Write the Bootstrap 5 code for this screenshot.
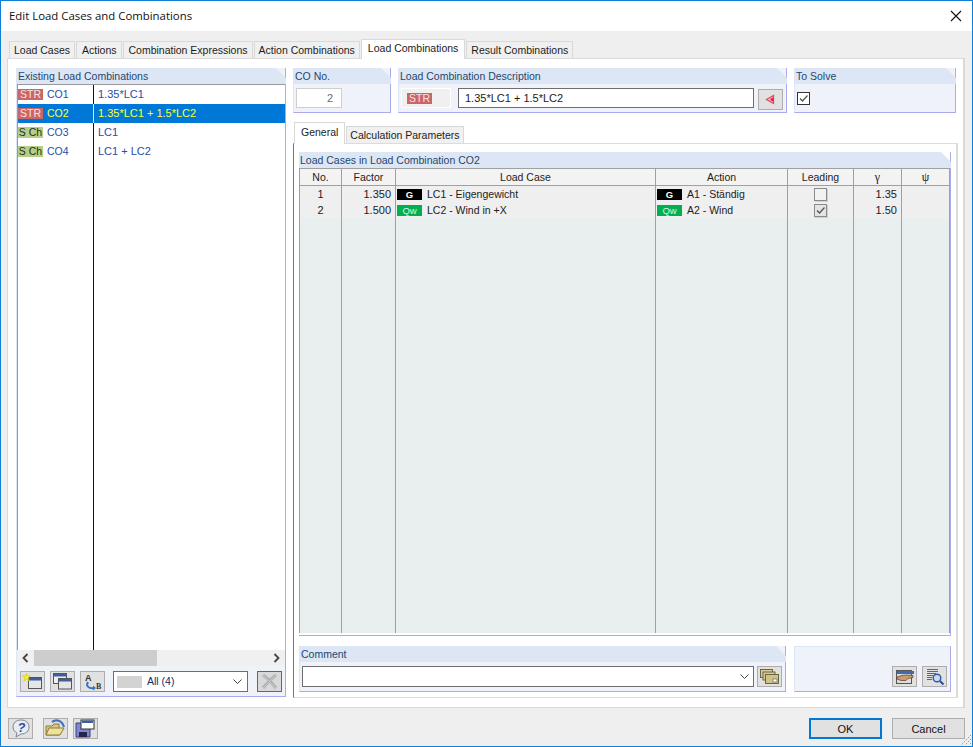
<!DOCTYPE html>
<html lang="en">
<head>
  <meta charset="UTF-8" />
  <title>Edit Load Cases and Combinations</title>
  <link href="https://cdn.jsdelivr.net/npm/bootstrap@5.3.2/dist/css/bootstrap.min.css" rel="stylesheet"/>
  <style>
    html, body { margin: 0; height: 100%; overflow: hidden; background: #efefef; }
    body, .form-control, .btn { font-family: "Liberation Sans", Arial, sans-serif; font-size: 10.5px; color: #1c1c1c; }

    .dlg-win { width: 973px; height: 747px; border: 1px solid #0f7fd6; background: #efefef; position: relative; }
    .dlg-title { height: 30px; background: #fff; padding: 0 10px 0 8px; font-family: "Open Sans", sans-serif; font-size: 11.4px; color: #111; flex: none; }
    .dlg-main { padding: 7px 7px 0 6px; min-height: 0; }

    /* tabs */
    .dlg-tabs { border: 0; padding-left: 2px; height: 20px; align-items: flex-end; flex-wrap: nowrap; }
    .dlg-tabs .nav-link { height: 17px; padding: 0 4px; margin: 0 1px 0 0; line-height: 17px; border: 1px solid #d9d9d9; border-bottom: 0; border-radius: 0; background: #f0f0f0; color: #1c1c1c; font-size: 10.5px; }
    .dlg-tabs .nav-link.tab-wide { padding: 0 5px; }
    .dlg-tabs .nav-link.active { height: 20px; line-height: 16px; padding: 0 6px; background: #fff; color: #1c1c1c; border-color: #d9d9d9; margin-bottom: -1px; position: relative; z-index: 1; }
    .sub-tabs { height: 21px; padding-left: 1px; }
    .sub-tabs .nav-link { padding: 0 3px; }
    .sub-tabs .nav-link.active { height: 22px; line-height: 18px; }

    .panel-box { width: 958px; height: 650px; background: #fff; border: 1px solid #d9d9d9; border-right-width: 2px; padding: 9px 0 0 8px; gap: 7px; flex: none; }

    /* blue group boxes */
    .grp { background: #eff2f8; border-right: 1px solid #aaaaec; border-bottom: 1px solid #aaaaec; border-left: 1px solid #dce6f4; flex: none; }
    .grp-head { height: 16px; line-height: 16px; background: #dce6f4; color: #24466f; padding-left: 1px; margin-right: -1px; clip-path: polygon(0 0, calc(100% - 10px) 0, 100% 10px, 100% 100%, 0 100%); flex: none; }

    /* left list */
    .grp-list { width: 270px; height: 629px; }
    .combo-list { background: #fff; border-top: 1px solid #9a9a9a; border-left: 1px solid #9a9a9a; position: relative; min-height: 0; }
    .combo-list::before { content: ""; position: absolute; left: 75px; top: 0; bottom: 0; width: 1px; background: #111; }
    .combo-row { height: 19px; line-height: 19px; color: #2a4aa8; position: relative; }
    .combo-row.picked { background: #0078d7; color: #ffff33; }
    .combo-row.picked .combo-id { border-right: 1px solid #d5e6f5; }
    .combo-id { width: 76px; gap: 4px; flex: none; }
    .combo-val { padding-left: 4px; font-size: 11px; }

    .sticker { display: inline-block; width: 25px; height: 11px; line-height: 11px; text-align: center; flex: none; }
    .st-str { background: #cc6666; color: #f6e3e3; }
    .st-sch { background: #b5cf8a; color: #26301a; }
    .st-g { background: #000; color: #fff; font-weight: 700; font-size: 9.5px; }
    .st-qw { background: #00b050; color: #d9f5e4; font-size: 9.5px; }

    .hscroll { height: 16px; background: #f0f0f0; flex: none; }
    .hscroll-thumb { position: absolute; left: 17px; width: 123px; top: 0; bottom: 0; background: #cdcdcd; }
    .hscroll .scroll-arrow { width: 17px; }

    .list-tools { height: 30px; padding: 5px 0 0 3px; gap: 5px; flex: none; }
    .tool-btn { width: 25px; height: 21px; padding: 0; border: 1px solid #adadad; border-radius: 0; background: #e1e1e1; flex: none; display: flex; align-items: center; justify-content: center; }
    .tool-btn.off { background: #cccccc; }
    .drop-box { height: 21px; border: 1px solid #6e6e6e; background: #fff; color: #12296e; flex: none; }
    .drop-all { width: 135px; margin: 0 4px 0 3px; padding: 0 5px 0 3px; gap: 5px; }
    .swatch { width: 25px; height: 12px; background: #d3d3d3; flex: none; }

    /* top row on the right */
    .side-col { width: 664px; flex: none; }
    .top-row { gap: 7px; height: 45px; flex: none; }
    .grp-no { width: 98px; }
    .grp-desc { width: 389px; }
    .grp-solve { width: 162px; }
    .grp-body-pad { padding: 4px 0 0 2px; }
    .dlg-input.form-control { height: 20px; min-height: 0; padding: 0 6px; border-radius: 0; border: 1px solid #6e6e6e; font-size: 11px; color: #1c1c1c; box-shadow: none; }
    .no-input.form-control { width: 46px; border-color: #cfcfcf; text-align: right; color: #6a6a6a; padding-right: 8px; background: #fff; }
    .desc-sticker { width: 50px; height: 20px; margin-right: 7px; padding-left: 5px; background: #f0f0f0; border: 1px solid #fff; flex: none; }
    .desc-input.form-control { width: 296px; flex: none; }
    .grp-desc .tool-btn { margin: 1px 0 0 4px; }

    .form-check-input.dlg-check { width: 13px; height: 13px; margin: 0; border: 1px solid #333; border-radius: 0; background-color: #fff; box-shadow: none; float: none; flex: none; }
    .form-check-input.dlg-check:checked { background-color: #fff; border-color: #333; background-size: 11px; background-image: url("data:image/svg+xml,%3csvg xmlns='http://www.w3.org/2000/svg' viewBox='0 0 11 11'%3e%3cpath fill='none' stroke='%23555' stroke-width='1.3' d='M2 5.5 4.5 8 9.5 2.5'/%3e%3c/svg%3e"); }
    .form-check-input.dlg-check.dim { border-color: #8a8a8a; box-shadow: 1px 1px 0 #cfcfcf; opacity: 1; vertical-align: middle; background-color: #f2f2f2; }
    .form-check-input.dlg-check.dim:checked { background-color: #e4e4e4; border-color: #8a8a8a; }

    .sub-wrap { margin: 9px 0 0 0; flex: none; }
    .sub-pane { width: 665px; height: 555px; border: 1px solid #dcdcdc; border-left-color: #777; border-right-width: 2px; padding: 8px 0 0 5px; background: #fff; }

    /* grid */
    .grp-grid { width: 652px; height: 484px; background: #fff; border-left: 0; }
    .lc-grid { table-layout: fixed; width: 651px; height: 465px; border-collapse: separate; border-spacing: 0; }
    .lc-grid > :not(caption) > * > * { padding: 0 4px; border-width: 0 1px 0 0; border-style: solid; border-color: #a0a0a0; background-color: #efefef; color: #1c1c1c; font-size: 11px; line-height: 15px; height: 16px; vertical-align: middle; white-space: nowrap; box-shadow: none; }
    .lc-grid > thead > tr > th { font-weight: 400; font-size: 10.5px; text-align: center; background-color: #f3f3f3; border-top-width: 1px; border-bottom-width: 1px; height: 18px; }
    .lc-grid > :not(caption) > * > *:first-child { border-left-width: 1px; }
    .lc-grid > :not(caption) > tr.rest > td { height: auto; background-color: #e9eeee; }
    .lc-grid > tbody > tr > td.case-cell { padding: 0 0 0 1px; font-size: 10.5px; }
    .case-inner { gap: 5px; }
    .lc-grid > thead > tr > th.greek { font-family: "Liberation Serif", serif; font-size: 12px; }

    .bottom-row { gap: 8px; margin-top: 10px; }
    .grp-comment { width: 487px; height: 46px; }
    .comment-line { padding: 4px 0 0 2px; }
    .grp-extra { width: 157px; height: 46px; border-top: 1px solid #dce6f4; padding: 19px 3px 0 0; gap: 5px; }
    .drop-comment { width: 452px; margin-right: 3px; padding-right: 4px; }

    /* bottom buttons */
    .dlg-foot { height: 38px; padding: 10px 0 0 1px; }
    .foot-btn { width: 73px; height: 21px; padding: 0; border: 1px solid #adadad; border-radius: 0; background: #e1e1e1; color: #111; font-size: 11px; line-height: 18px; }
    .foot-btn.main-btn { border: 2px solid #0078d7; line-height: 16px; }
    .foot-gap { gap: 10px; }
    .foot-tight { gap: 5px; }
    .grip { position: absolute; right: 0; bottom: 0; }
  </style>
</head>
<body>
  <div class="dlg-win d-flex flex-column">
    <div class="dlg-title d-flex align-items-center justify-content-between">
      <span>Edit Load Cases and Combinations</span>
      <svg width="12" height="12" viewBox="0 0 12 12"><path d="M1 1 11 11M11 1 1 11" stroke="#111" stroke-width="1.1"/></svg>
    </div>

    <div class="dlg-main flex-grow-1 d-flex flex-column">
      <ul class="nav nav-tabs dlg-tabs">
        <li class="nav-item"><a class="nav-link" href="#">Load Cases</a></li>
        <li class="nav-item"><a class="nav-link tab-wide" href="#">Actions</a></li>
        <li class="nav-item"><a class="nav-link" href="#">Combination Expressions</a></li>
        <li class="nav-item"><a class="nav-link" href="#">Action Combinations</a></li>
        <li class="nav-item"><a class="nav-link active" href="#">Load Combinations</a></li>
        <li class="nav-item"><a class="nav-link" href="#">Result Combinations</a></li>
      </ul>

      <div class="panel-box d-flex">
        <!-- Existing combinations -->
        <section class="grp grp-list d-flex flex-column">
          <div class="grp-head">Existing Load Combinations</div>
          <div class="combo-list flex-grow-1">
            <div class="combo-row d-flex"><div class="combo-id d-flex align-items-center"><span class="sticker st-str">STR</span><span>CO1</span></div><div class="combo-val">1.35*LC1</div></div>
            <div class="combo-row picked d-flex"><div class="combo-id d-flex align-items-center"><span class="sticker st-str">STR</span><span>CO2</span></div><div class="combo-val">1.35*LC1 + 1.5*LC2</div></div>
            <div class="combo-row d-flex"><div class="combo-id d-flex align-items-center"><span class="sticker st-sch">S Ch</span><span>CO3</span></div><div class="combo-val">LC1</div></div>
            <div class="combo-row d-flex"><div class="combo-id d-flex align-items-center"><span class="sticker st-sch">S Ch</span><span>CO4</span></div><div class="combo-val">LC1 + LC2</div></div>
          </div>
          <div class="hscroll d-flex justify-content-between align-items-center position-relative">
            <span class="scroll-arrow d-flex justify-content-center"><svg width="7" height="10" viewBox="0 0 7 10"><path d="M5.5 1 1.5 5 5.5 9" fill="none" stroke="#444" stroke-width="1.8"/></svg></span>
            <span class="hscroll-thumb"></span>
            <span class="scroll-arrow d-flex justify-content-center"><svg width="7" height="10" viewBox="0 0 7 10"><path d="M1.5 1 5.5 5 1.5 9" fill="none" stroke="#444" stroke-width="1.8"/></svg></span>
          </div>
          <div class="list-tools d-flex align-items-start">
            <button class="btn tool-btn" type="button"><svg width="21" height="17" viewBox="0 0 21 17"><rect x="6.5" y="4.5" width="13" height="11" fill="#e6e6e6" stroke="#555"/><rect x="7" y="5" width="12" height="2.5" fill="#3d5f9e"/><path d="M4.5 0 5.6 3 8.6 3 6.2 5 7.2 8 4.5 6.2 1.8 8 2.8 5 .4 3 3.4 3Z" fill="#f6f02a" stroke="#c9b81a" stroke-width=".5"/></svg></button>
            <button class="btn tool-btn" type="button"><svg width="21" height="17" viewBox="0 0 21 17"><rect x="1.5" y=".5" width="13" height="10" fill="#eee" stroke="#555"/><rect x="2" y="1" width="12" height="2.5" fill="#3d5f9e"/><rect x="6.5" y="5.5" width="13" height="10.5" fill="#e6e6e6" stroke="#555"/><rect x="7" y="6" width="12" height="2.5" fill="#3d5f9e"/></svg></button>
            <button class="btn tool-btn" type="button"><svg width="21" height="18" viewBox="0 0 21 18"><text x="3" y="8" font-family="Liberation Sans" font-size="9" font-weight="700" fill="#333">A</text><path d="M6 9C3.5 13 7 16 12 15" fill="none" stroke="#3a74c4" stroke-width="2"/><path d="M11 12.5 14 15 11 17.5Z" fill="#3a74c4"/><text x="14" y="16" font-family="Liberation Serif" font-size="8" font-weight="700" fill="#333">B</text></svg></button>
            <div class="drop-box drop-all d-flex align-items-center">
              <span class="swatch"></span><span class="flex-grow-1">All (4)</span>
              <svg width="9" height="5" viewBox="0 0 9 5"><path d="M.5 .5 4.5 4.5 8.5 .5" fill="none" stroke="#444"/></svg>
            </div>
            <button class="btn tool-btn off" type="button" disabled><svg width="17" height="17" viewBox="0 0 17 17"><path d="M2 2C6 5 8 6 15 15M15 2C11 5 9 7 2 15" fill="none" stroke="#8d8d8d" stroke-width="3"/><path d="M2 2 15 15M15 2 2 15" stroke="#b5b5b5" stroke-width="1"/></svg></button>
          </div>
        </section>

        <div class="side-col d-flex flex-column">
          <div class="top-row d-flex">
            <section class="grp grp-no">
              <div class="grp-head">CO No.</div>
              <div class="grp-body-pad"><input class="form-control dlg-input no-input" value="2" readonly></div>
            </section>
            <section class="grp grp-desc">
              <div class="grp-head">Load Combination Description</div>
              <div class="grp-body-pad d-flex align-items-start">
                <div class="desc-sticker d-flex align-items-center"><span class="sticker st-str">STR</span></div>
                <input class="form-control dlg-input desc-input" value="1.35*LC1 + 1.5*LC2">
                <button class="btn tool-btn" type="button"><svg width="13" height="13" viewBox="0 0 13 13"><path d="M2.5 6.5 9.5 2.5V10.5Z" fill="#f9c8d0" stroke="#e0455a" stroke-width="1.2"/><path d="M6.5 5.5 9.5 4.5V8.5L6.5 7.5Z" fill="#d8293f"/></svg></button>
              </div>
            </section>
            <section class="grp grp-solve">
              <div class="grp-head">To Solve</div>
              <div class="grp-body-pad pt-2"><input class="form-check-input dlg-check d-block" type="checkbox" checked></div>
            </section>
          </div>

          <div class="sub-wrap">
            <ul class="nav nav-tabs dlg-tabs sub-tabs">
              <li class="nav-item"><a class="nav-link active" href="#">General</a></li>
              <li class="nav-item"><a class="nav-link" href="#">Calculation Parameters</a></li>
            </ul>
            <div class="sub-pane">
              <section class="grp grp-grid">
                <div class="grp-head">Load Cases in Load Combination CO2</div>
                <table class="table lc-grid mb-0">
                  <colgroup><col style="width:43px"><col style="width:54px"><col style="width:260px"><col style="width:132px"><col style="width:66px"><col style="width:48px"><col style="width:48px"></colgroup>
                  <thead>
                    <tr><th>No.</th><th>Factor</th><th>Load Case</th><th>Action</th><th>Leading</th><th class="greek">γ</th><th class="greek">ψ</th></tr>
                  </thead>
                  <tbody>
                    <tr>
                      <td class="text-center">1</td><td class="text-end">1.350</td>
                      <td class="case-cell"><div class="case-inner d-flex align-items-center"><span class="sticker st-g">G</span>LC1 - Eigengewicht</div></td>
                      <td class="case-cell"><div class="case-inner d-flex align-items-center"><span class="sticker st-g">G</span>A1 - Ständig</div></td>
                      <td class="text-center"><input class="form-check-input dlg-check dim" type="checkbox"></td>
                      <td class="text-end">1.35</td><td></td>
                    </tr>
                    <tr>
                      <td class="text-center">2</td><td class="text-end">1.500</td>
                      <td class="case-cell"><div class="case-inner d-flex align-items-center"><span class="sticker st-qw">Qw</span>LC2 - Wind in +X</div></td>
                      <td class="case-cell"><div class="case-inner d-flex align-items-center"><span class="sticker st-qw">Qw</span>A2 - Wind</div></td>
                      <td class="text-center"><input class="form-check-input dlg-check dim" type="checkbox" checked></td>
                      <td class="text-end">1.50</td><td></td>
                    </tr>
                    <tr class="rest"><td></td><td></td><td></td><td></td><td></td><td></td><td></td></tr>
                  </tbody>
                </table>
              </section>

              <div class="bottom-row d-flex">
                <section class="grp grp-comment">
                  <div class="grp-head">Comment</div>
                  <div class="comment-line d-flex">
                    <div class="drop-box drop-comment d-flex align-items-center justify-content-end">
                      <svg width="9" height="5" viewBox="0 0 9 5"><path d="M.5 .5 4.5 4.5 8.5 .5" fill="none" stroke="#444"/></svg>
                    </div>
                    <button class="btn tool-btn" type="button"><svg width="19" height="15" viewBox="0 0 19 15"><rect x=".5" y=".5" width="12" height="8" fill="#d8cd95" stroke="#6b6540"/><rect x="3" y="3" width="12" height="8" fill="#d8cd95" stroke="#6b6540"/><rect x="5.5" y="5.5" width="13" height="9" fill="#cfc388" stroke="#6b6540"/><rect x="13" y="10" width="4" height="3" fill="#fff" stroke="#555" stroke-width=".6"/></svg></button>
                  </div>
                </section>
                <section class="grp grp-extra d-flex justify-content-end align-items-start">
                  <button class="btn tool-btn" type="button"><svg width="20" height="17" viewBox="0 0 20 17"><rect x="1.5" y="2.5" width="15" height="13" fill="#ddd" stroke="#555"/><rect x="2" y="3" width="17" height="3" fill="#3d6cb0"/><path d="M2 9 7 7.5 12 7 18 7.5V9.5L13 10.5 11 12.5H6L2 11Z" fill="#c99a74" stroke="#5b3a24" stroke-width=".7"/></svg></button>
                  <button class="btn tool-btn" type="button"><svg width="20" height="18" viewBox="0 0 20 18"><path d="M2 1.5H13M2 3.5H13M2 5.5H11M2 7.5H8M2 9.5H7M2 11.5H7" stroke="#666"/><circle cx="12" cy="10" r="3.8" fill="#c3dbf4" stroke="#31569c" stroke-width="1.4"/><path d="M15 13 18.5 16.5" stroke="#31569c" stroke-width="2.2"/></svg></button>
                </section>
              </div>
            </div>
          </div>
        </div>
      </div>

      <div class="dlg-foot d-flex justify-content-between">
        <div class="d-flex foot-gap">
          <button class="btn tool-btn" type="button"><svg width="20" height="19" viewBox="0 0 20 19"><path d="M10 1C5 1 2 4 2 8c0 3 2 5 4 6l-1 4 5-3c5 0 8-3 8-7s-3-7-8-7Z" fill="#e8edf5" stroke="#7d8491"/><text x="6.5" y="13" font-family="Liberation Sans" font-size="13" font-weight="700" font-style="italic" fill="#33509a">?</text></svg></button>
          <div class="d-flex foot-tight">
            <button class="btn tool-btn" type="button"><svg width="21" height="19" viewBox="0 0 21 19"><path d="M7 3C11 0 17 1 19 8" fill="none" stroke="#4a72b8" stroke-width="2.2"/><path d="M1 7H7L9 5H14V16H1Z" fill="#d8c67a" stroke="#8c7c3a"/><path d="M1 16 4 9H19L15 16Z" fill="#efe09c" stroke="#8c7c3a"/></svg></button>
            <button class="btn tool-btn" type="button"><svg width="21" height="19" viewBox="0 0 21 19"><path d="M1 4H15V18H1Z" fill="#8088d4" stroke="#3a3f7a"/><rect x="4" y="13" width="8" height="5" fill="#23264a"/><rect x="6" y="1" width="13" height="9" fill="#fff" stroke="#333"/><rect x="7" y="1.5" width="11" height="2.5" fill="#3d5f9e"/></svg></button>
          </div>
        </div>
        <div class="d-flex foot-gap">
          <button class="btn foot-btn main-btn" type="button">OK</button>
          <button class="btn foot-btn" type="button">Cancel</button>
        </div>
      </div>
    </div>

    <svg class="grip" width="12" height="12" viewBox="0 0 12 12"><path d="M11 1 1 11M11 5 5 11M11 9 9 11" stroke="#9a9a9a" stroke-dasharray="1.5 1.2"/></svg>
  </div>

  <script src="https://cdn.jsdelivr.net/npm/bootstrap@5.3.2/dist/js/bootstrap.bundle.min.js"></script>
</body>
</html>
